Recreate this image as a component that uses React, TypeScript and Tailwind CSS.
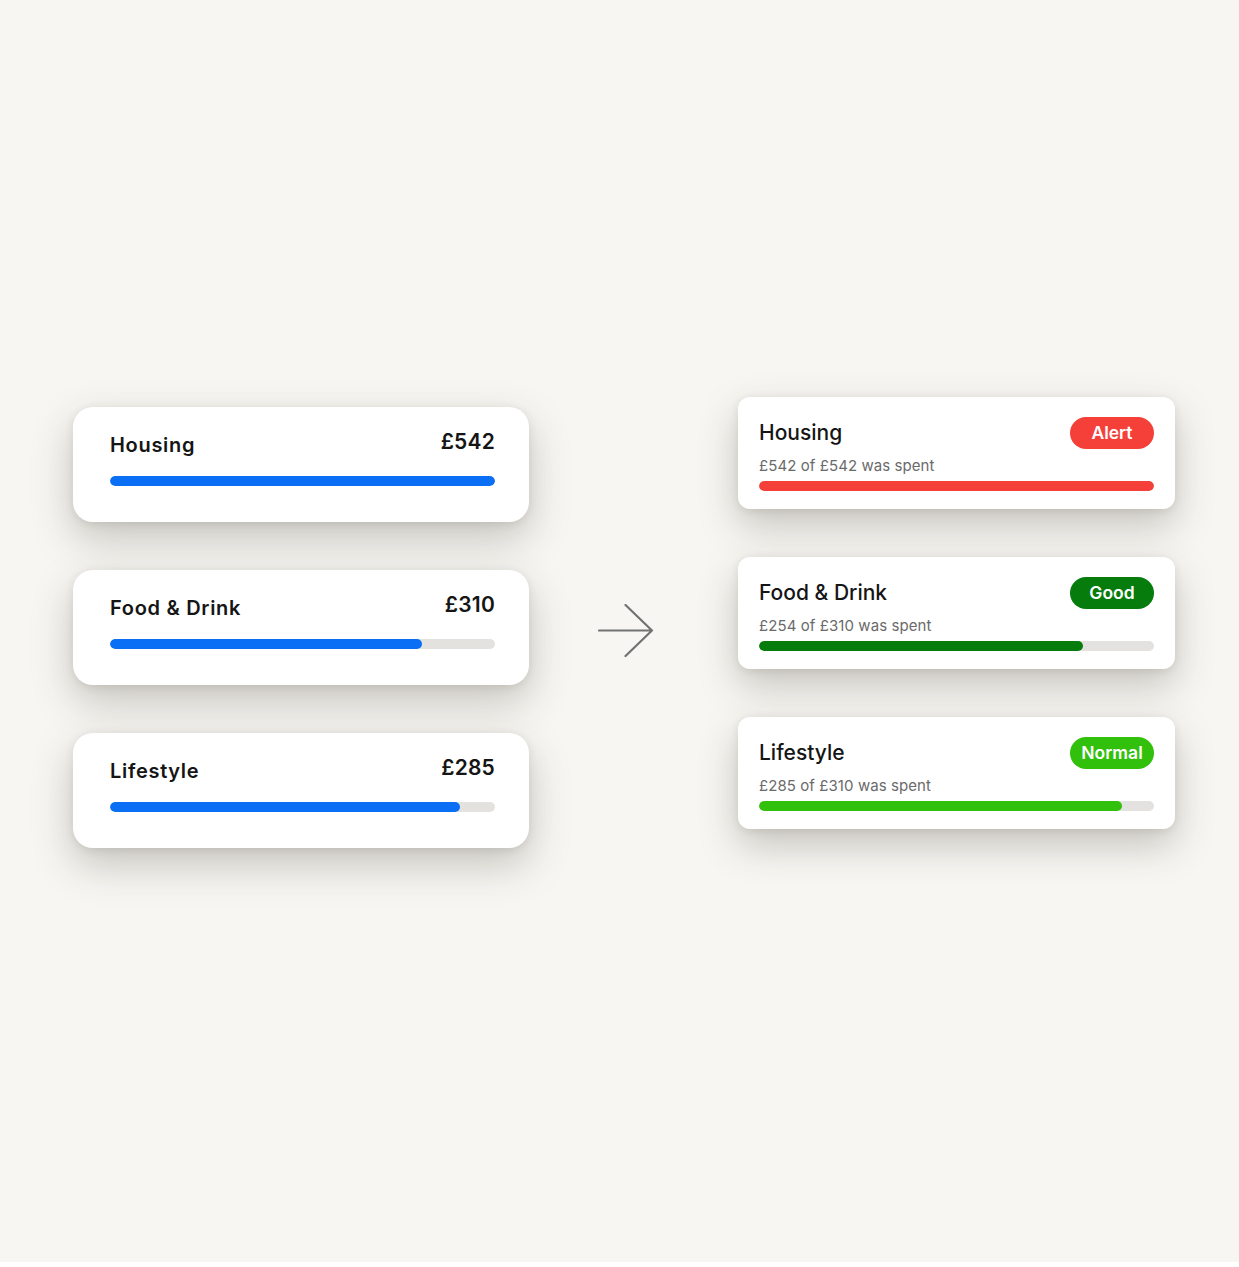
import React from "react";

const leftCards = [
  { title: "Housing", amount: "£542", pct: 100 },
  { title: "Food & Drink", amount: "£310", pct: 81 },
  { title: "Lifestyle", amount: "£285", pct: 91 },
];

const rightCards = [
  { title: "Housing", sub: "£542 of £542 was spent", pct: 100, badge: "Alert", badgeCls: "bg-[#f5403a]", barCls: "bg-[#f5403a]" },
  { title: "Food & Drink", sub: "£254 of £310 was spent", pct: 82, badge: "Good", badgeCls: "bg-[#067c0c]", barCls: "bg-[#067c0c]" },
  { title: "Lifestyle", sub: "£285 of £310 was spent", pct: 92, badge: "Normal", badgeCls: "bg-[#31c10c]", barCls: "bg-[#31c10c]" },
];

export default function App() {
  return (
    <div className="w-full min-h-[1267px] bg-white font-['Inter',sans-serif]">
      <div className="h-[1262px] w-full bg-[#f7f6f2] flex items-start">
        <div className="ml-[73px] mt-[407px] w-[456px] flex flex-col gap-[48px]">
          {leftCards.map((c) => (
            <div
              key={c.title}
              className="h-[115px] bg-white rounded-[20px] pt-[22px] pl-[37px] pr-[34px] shadow-[0_16px_40px_rgba(55,50,40,0.26),0_2px_8px_rgba(55,50,40,0.10)]"
            >
              <div className="flex items-start justify-between h-[28px]">
                <span className="mt-[4px] text-[20px] leading-[24px] font-semibold tracking-[0.035em] text-[#151515]">
                  {c.title}
                </span>
                <span className="text-[21px] leading-[26px] font-semibold tracking-[0.01em] text-[#151515]">
                  {c.amount}
                </span>
              </div>
              <div className="mt-[19px] h-[10px] rounded-full bg-[#e4e2de] overflow-hidden">
                <div className="h-full rounded-full bg-[#0a6ff5]" style={{ width: `${c.pct}%` }} />
              </div>
            </div>
          ))}
        </div>

        <div className="ml-[69px] mt-[604px] w-[56px]">
          <svg width="56" height="54" viewBox="0 0 56 54" fill="none">
            <path d="M1 26.5 H54 M27.5 1 L54 26.5 L27.5 52" stroke="#727272" strokeWidth="2.2" strokeLinecap="round" strokeLinejoin="round" />
          </svg>
        </div>

        <div className="ml-[84px] mt-[397px] w-[437px] flex flex-col gap-[48px]">
          {rightCards.map((c) => (
            <div
              key={c.title}
              className="h-[112px] bg-white rounded-[12px] pt-[20px] px-[21px] shadow-[0_16px_38px_rgba(55,50,40,0.26),0_2px_8px_rgba(55,50,40,0.10)]"
            >
              <div className="flex items-center justify-between h-[32px]">
                <span className="text-[21px] leading-[26px] font-medium text-[#151515]">{c.title}</span>
                <span
                  className={`${c.badgeCls} h-[32px] w-[84px] rounded-full flex items-center justify-center text-white text-[17.5px] font-semibold leading-none`}
                >
                  {c.badge}
                </span>
              </div>
              <div className="mt-[7px] text-[15px] leading-[20px] tracking-[0.005em] text-[#6a6a6a]">{c.sub}</div>
              <div className="mt-[5px] h-[10px] rounded-full bg-[#e4e2de] overflow-hidden">
                <div className={`h-full rounded-full ${c.barCls}`} style={{ width: `${c.pct}%` }} />
              </div>
            </div>
          ))}
        </div>
      </div>
    </div>
  );
}
